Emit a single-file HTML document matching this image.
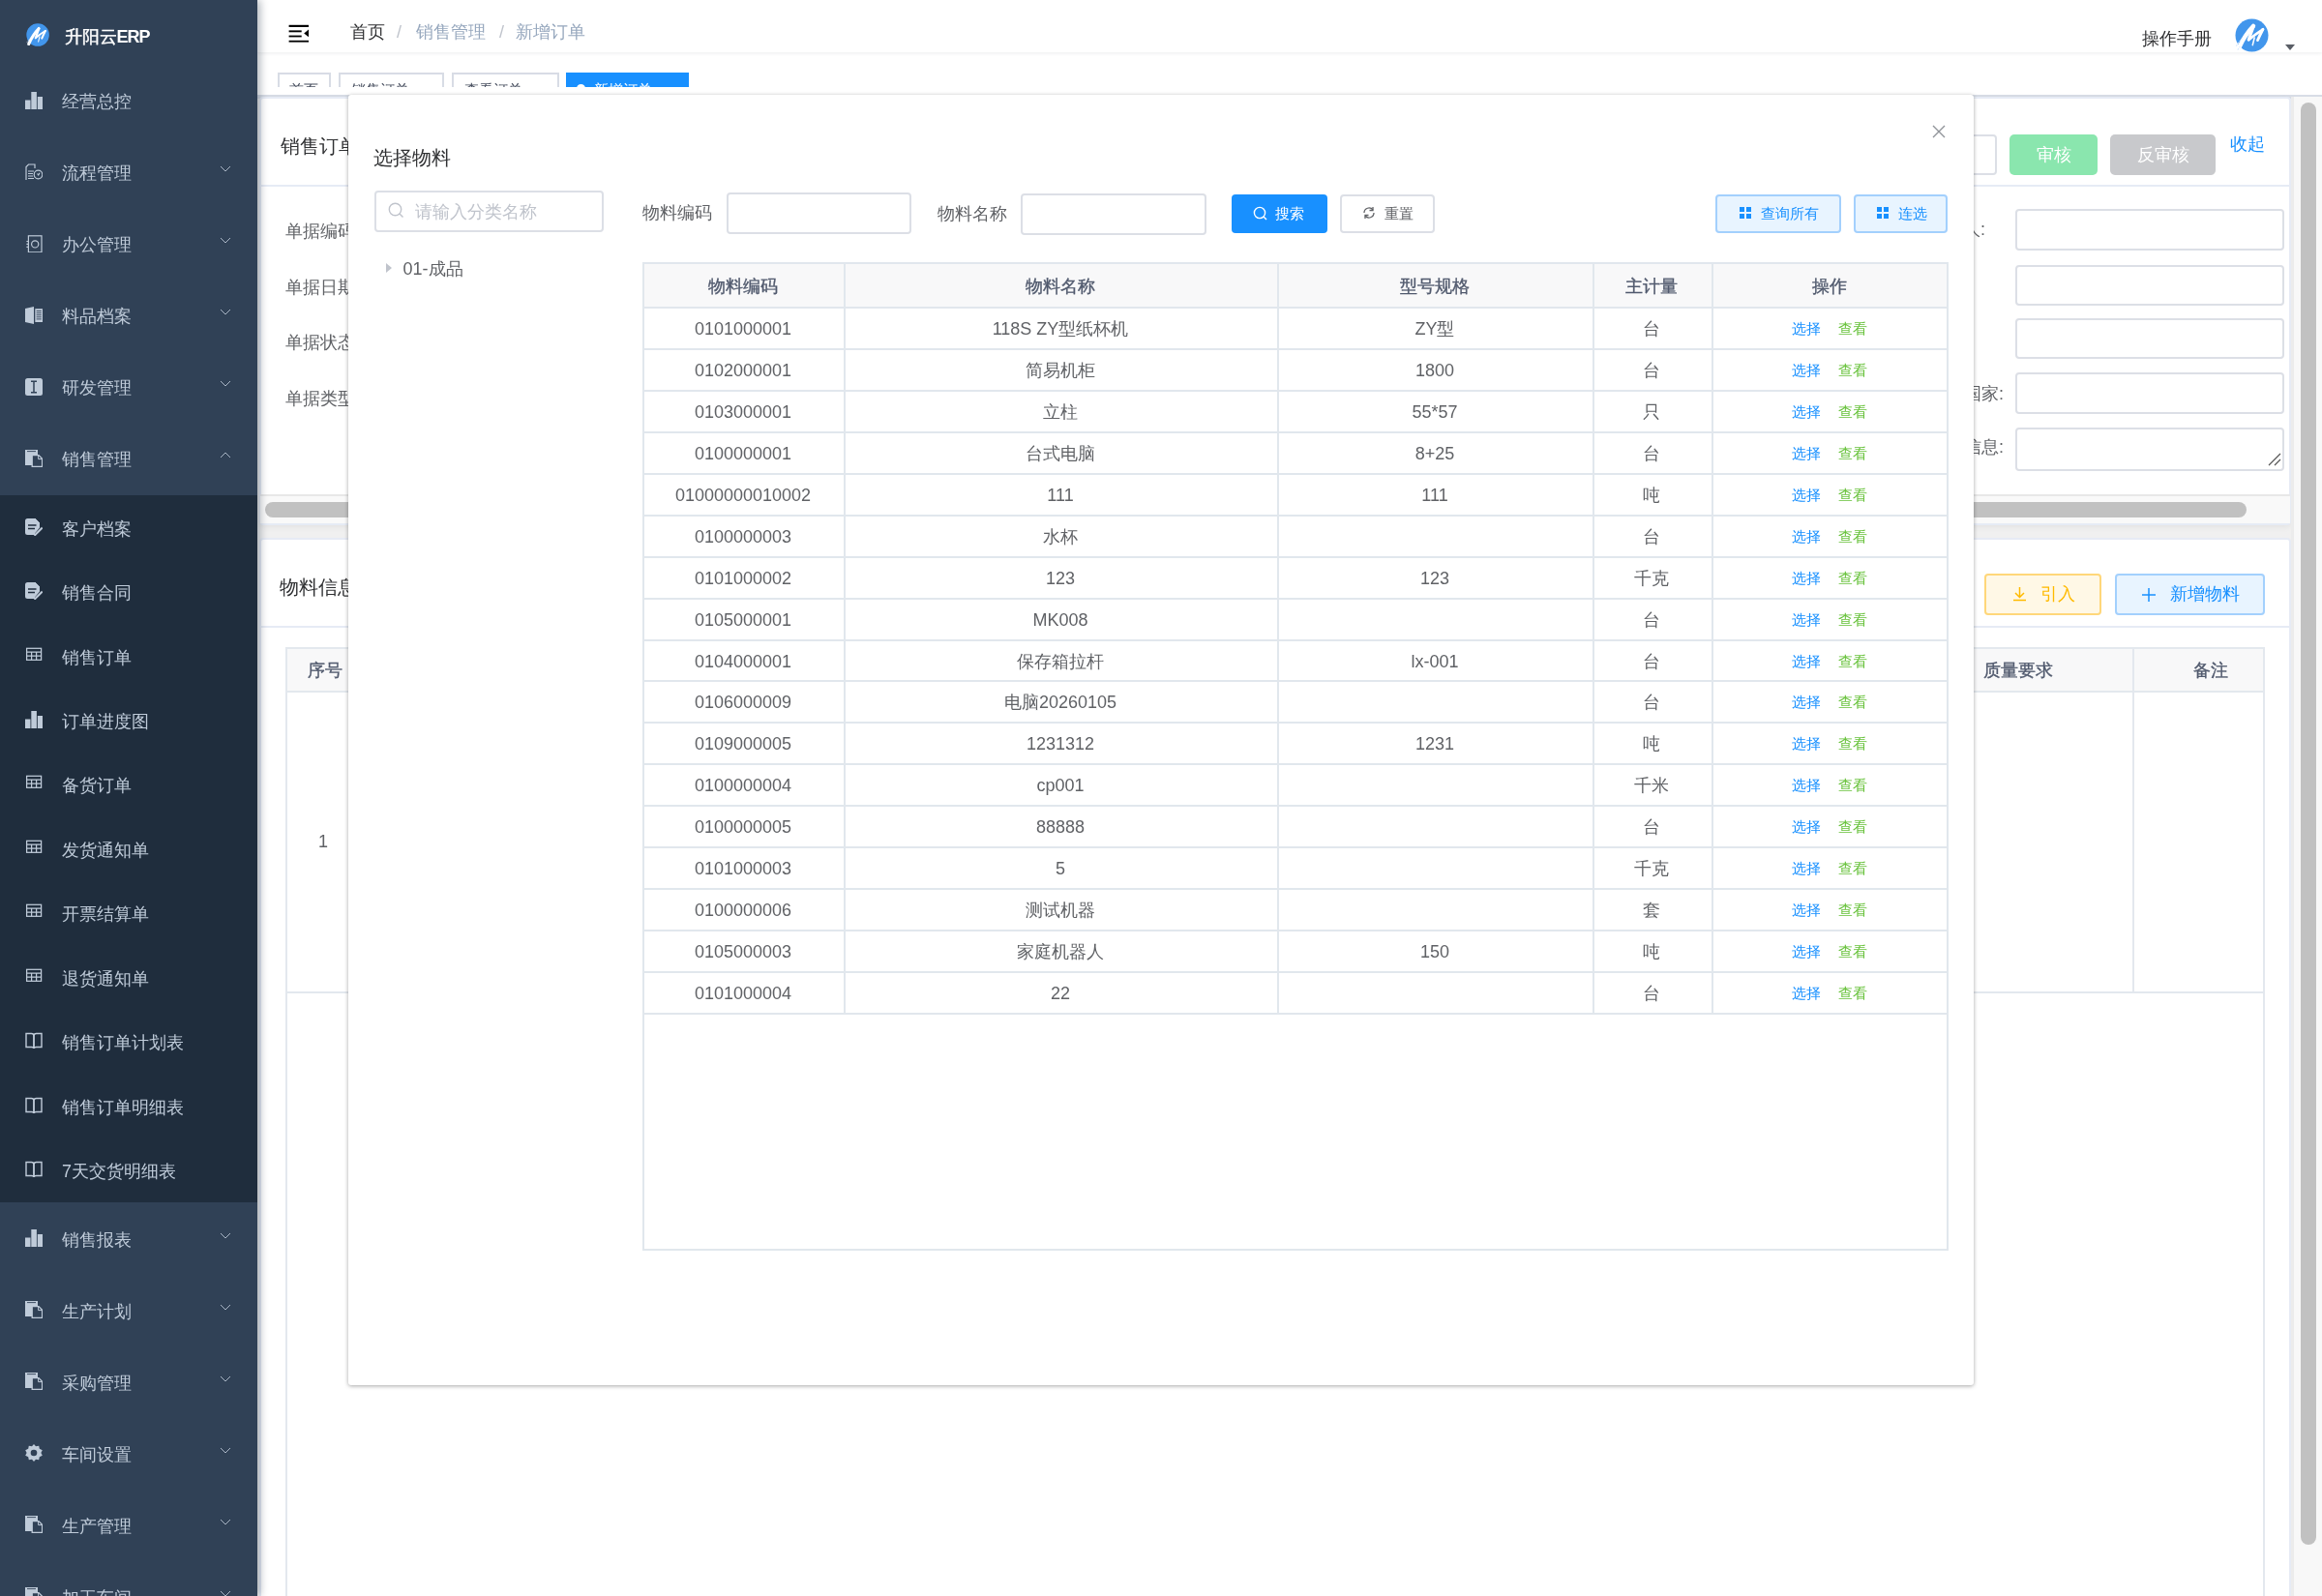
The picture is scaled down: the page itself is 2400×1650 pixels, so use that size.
<!DOCTYPE html>
<html><head><meta charset="utf-8">
<style>
*{box-sizing:border-box;margin:0;padding:0}
html,body{width:2400px;height:1650px;overflow:hidden;background:#fff;font-family:"Liberation Sans",sans-serif;}
.abs{position:absolute;display:block}
.txt{position:absolute;white-space:nowrap;line-height:20px}
.box{position:absolute}
.inp{position:absolute;border:2px solid #DCDFE6;border-radius:4px;background:#fff}
</style></head>
<body><div style="position:absolute;left:0;top:0;width:2400px;height:1650px;overflow:hidden;will-change:transform">

<div class="box" style="left:266px;top:0;width:2134px;height:1650px;background:#fff"></div>
<div class="box" style="left:266px;top:98px;width:2134px;height:1552px;background:#f0f0f0"></div>
<div class="box" style="left:266px;top:98px;width:2134px;height:3.5px;background:#d8dde6"></div>
<div class="box" style="left:266px;top:0;width:2134px;height:54px;background:#fff;box-shadow:0 1px 4px rgba(0,21,41,.08);z-index:2"></div>
<div class="box" style="left:266px;top:54px;width:2134px;height:43px;background:#fff;z-index:1"></div>
<svg class="abs" style="left:298px;top:25px;z-index:3" width="22" height="20" viewBox="0 0 22 20"><g fill="#000"><rect x="0.6" y="0.8" width="20.4" height="2.2"/><rect x="0.6" y="6.4" width="13.1" height="1.9"/><rect x="0.6" y="11.6" width="13.1" height="1.8"/><rect x="0.6" y="16.8" width="20.4" height="1.8"/><path d="M21 5.6V13.3L16.2 9.45Z"/></g></svg>
<div style="position:absolute;left:0;top:0;z-index:3">
<div class="txt" style="left:362px;top:23px;font-size:18px;color:#303133;font-weight:normal;">首页</div>
<div class="txt" style="left:410px;top:23px;font-size:18px;color:#c0c4cc;font-weight:normal;">/</div>
<div class="txt" style="left:430px;top:23px;font-size:18px;color:#97a8be;font-weight:normal;">销售管理</div>
<div class="txt" style="left:516px;top:23px;font-size:18px;color:#c0c4cc;font-weight:normal;">/</div>
<div class="txt" style="left:533px;top:23px;font-size:18px;color:#97a8be;font-weight:normal;">新增订单</div>
<div class="txt" style="left:2214px;top:30px;font-size:18px;color:#303133;font-weight:normal;">操作手册</div>
</div>
<svg class="abs" style="left:2310.2px;top:18.9px;z-index:3;overflow:visible" width="35" height="35" viewBox="0 0 36 36"><circle cx="18" cy="18" r="17.5" fill="#4296ec"/><g fill="none" stroke="#fff" stroke-linecap="round" stroke-linejoin="round"><path d="M4 32 Q10.5 17.5 19.5 8.2" stroke-width="4.6"/><path d="M19.8 8.5 Q17.6 14.5 14.6 22.6" stroke-width="3.2"/><path d="M14.6 22.8 Q22 16.5 29.8 11.6" stroke-width="2.8"/><path d="M29.6 11.8 Q26.4 18 24.2 23.2" stroke-width="3"/><path d="M20.8 20.5 L18.8 28.4" stroke-width="1.6"/></g><path d="M1.2 29.5 L7.5 21.5 M2.8 33.5 L5.5 30" stroke="#d6e8fd" stroke-width="1.1" stroke-dasharray="2 1"/></svg>
<svg class="abs" style="left:2362px;top:46px;z-index:3" width="10" height="6" viewBox="0 0 10 6"><path d="M0 0H10L5 6Z" fill="#5a5e66"/></svg>
<div class="box" style="left:266px;top:54px;width:2134px;height:36px;overflow:hidden;z-index:2">
<div class="box" style="left:21px;top:21px;width:54.69999999999999px;height:40px;border:2px solid #d8dce5;background:#fff"></div>
<div class="txt" style="left:33px;top:28.5px;font-size:15px;color:#495060;font-weight:normal;">首页</div>
<div class="box" style="left:84.39999999999998px;top:21px;width:109.10000000000002px;height:40px;border:2px solid #d8dce5;background:#fff"></div>
<div class="txt" style="left:96.6px;top:28.5px;font-size:15px;color:#495060;font-weight:normal;">销售订单</div>
<div class="box" style="left:201.3px;top:21px;width:110.49999999999994px;height:40px;border:2px solid #d8dce5;background:#fff"></div>
<div class="txt" style="left:214px;top:28.5px;font-size:15px;color:#495060;font-weight:normal;">查看订单</div>
<div class="box" style="left:319px;top:21px;width:127px;height:40px;background:#1890ff"></div>
<div class="box" style="left:329.6px;top:33px;width:9px;height:9px;border-radius:50%;background:#fff"></div>
<div class="txt" style="left:348px;top:28.5px;font-size:15px;color:#fff;font-weight:normal;">新增订单</div>
</div>
<div class="box" style="left:268px;top:100px;width:2100px;height:443px;background:#fff;border:2px solid #e6ebf5;border-radius:4px;box-shadow:0 2px 6px rgba(0,0,0,.06)"></div>
<div class="box" style="left:269px;top:191px;width:2098px;height:2px;background:#e6ebf5"></div>
<div class="txt" style="left:290px;top:141px;font-size:20px;color:#303133;font-weight:normal;">销售订单</div>
<div class="txt" style="left:295px;top:229.0px;font-size:18px;color:#606266;font-weight:normal;">单据编码</div>
<div class="txt" style="left:295px;top:286.5px;font-size:18px;color:#606266;font-weight:normal;">单据日期</div>
<div class="txt" style="left:295px;top:344.0px;font-size:18px;color:#606266;font-weight:normal;">单据状态</div>
<div class="txt" style="left:295px;top:401.5px;font-size:18px;color:#606266;font-weight:normal;">单据类型</div>
<div class="inp" style="left:1990px;top:139px;width:74px;height:42px"></div>
<div class="box" style="left:2077px;top:139px;width:91px;height:42px;border-radius:5px;background:#8ae6ae;color:#fff;font-size:18px;line-height:42px;text-align:center">审核</div>
<div class="box" style="left:2181px;top:139px;width:109px;height:42px;border-radius:5px;background:#c8c9cc;color:#fff;font-size:18px;line-height:42px;text-align:center">反审核</div>
<div class="txt" style="left:2305px;top:139px;font-size:18px;color:#1890ff;font-weight:normal;">收起</div>
<div class="inp" style="left:2083px;top:216px;width:278px;height:43px"></div>
<div class="inp" style="left:2083px;top:273.6px;width:278px;height:42px"></div>
<div class="inp" style="left:2083px;top:329.4px;width:278px;height:42px"></div>
<div class="inp" style="left:2083px;top:385.2px;width:278px;height:43px"></div>
<div class="inp" style="left:2083px;top:441.6px;width:278px;height:45px"></div>
<div class="txt" style="left:1900px;top:227px;width:152px;text-align:right;font-size:18px;color:#606266">负责人:</div>
<div class="txt" style="left:1900px;top:397px;width:171px;text-align:right;font-size:18px;color:#606266">国家:</div>
<div class="txt" style="left:1900px;top:452px;width:171px;text-align:right;font-size:18px;color:#606266">信息:</div>
<svg class="abs" style="left:2344px;top:468px" width="14" height="14" viewBox="0 0 14 14"><path d="M1 13L13 1M7 13L13 7" stroke="#555" stroke-width="1.2"/></svg>
<div class="box" style="left:269px;top:511px;width:2098px;height:30px;background:#f9f9f9;border-top:2px solid #e8e8e8"></div>
<div class="box" style="left:274px;top:519px;width:2048px;height:16px;border-radius:8px;background:#c1c1c1"></div>
<div class="box" style="left:268px;top:556px;width:2100px;height:1200px;background:#fff;border:2px solid #e6ebf5;border-radius:4px"></div>
<div class="box" style="left:269px;top:647px;width:2098px;height:2px;background:#e6ebf5"></div>
<div class="txt" style="left:289px;top:597px;font-size:20px;color:#303133;font-weight:normal;">物料信息</div>
<div class="box" style="left:2051px;top:593px;width:121px;height:43px;border-radius:4px;background:#fff8e6;border:2px solid #ffd77a"></div>
<svg class="abs" style="left:2080px;top:606px" width="15" height="16" viewBox="0 0 15 16"><path d="M7.5 1V11M3 7L7.5 11.5L12 7M1 14.5H14" fill="none" stroke="#ffba00" stroke-width="1.5"/></svg>
<div class="txt" style="left:2109px;top:604px;font-size:18px;color:#ffba00;font-weight:normal;">引入</div>
<div class="box" style="left:2186px;top:593px;width:155px;height:43px;border-radius:4px;background:#e8f4ff;border:2px solid #a3d0fd"></div>
<svg class="abs" style="left:2213px;top:607px" width="16" height="16" viewBox="0 0 16 16"><path d="M8 1V15M1 8H15" fill="none" stroke="#1890ff" stroke-width="1.5"/></svg>
<div class="txt" style="left:2243px;top:604px;font-size:18px;color:#1890ff;font-weight:normal;">新增物料</div>
<div class="box" style="left:295px;top:669px;width:2046px;height:1000px;border:2px solid #e3e8ee;border-bottom:none"></div>
<div class="box" style="left:297px;top:671px;width:2042px;height:45px;background:#f8f8f9;border-bottom:2px solid #e3e8ee"></div>
<div class="box" style="left:2204px;top:671px;width:2px;height:356px;background:#e3e8ee"></div>
<div class="box" style="left:297px;top:1025px;width:2042px;height:2px;background:#e3e8ee"></div>
<div class="txt" style="left:318px;top:682.5px;font-size:18px;color:#515a6e;font-weight:normal;-webkit-text-stroke:0.35px #515a6e">序号</div>
<div class="txt" style="left:2050px;top:682.5px;font-size:18px;color:#515a6e;font-weight:normal;-webkit-text-stroke:0.35px #515a6e">质量要求</div>
<div class="txt" style="left:2267px;top:682.5px;font-size:18px;color:#515a6e;font-weight:normal;-webkit-text-stroke:0.35px #515a6e">备注</div>
<div class="txt" style="left:329px;top:860px;font-size:18px;color:#606266;font-weight:normal;">1</div>
<div class="box" style="left:2368px;top:100px;width:32px;height:1550px;background:#f8f8f8;border-left:3px solid #ececec"></div>
<div class="box" style="left:2378px;top:106px;width:16px;height:1491px;border-radius:8px;background:#c1c1c1"></div>
<div class="box" style="left:0;top:0;width:266px;height:1650px;background:#304156;box-shadow:3px 0 8px rgba(0,21,41,.3);z-index:4">
<svg class="abs" style="left:26.9px;top:23.6px;overflow:visible" width="24.2" height="24.2" viewBox="0 0 36 36"><circle cx="18" cy="18" r="17.5" fill="#4296ec"/><g fill="none" stroke="#fff" stroke-linecap="round" stroke-linejoin="round"><path d="M4 32 Q10.5 17.5 19.5 8.2" stroke-width="4.6"/><path d="M19.8 8.5 Q17.6 14.5 14.6 22.6" stroke-width="3.2"/><path d="M14.6 22.8 Q22 16.5 29.8 11.6" stroke-width="2.8"/><path d="M29.6 11.8 Q26.4 18 24.2 23.2" stroke-width="3"/><path d="M20.8 20.5 L18.8 28.4" stroke-width="1.6"/></g><path d="M1.2 29.5 L7.5 21.5 M2.8 33.5 L5.5 30" stroke="#d6e8fd" stroke-width="1.1" stroke-dasharray="2 1"/></svg>
<div class="txt" style="left:66.5px;top:28px;font-size:18px;color:#fff;font-weight:normal;"><span style="-webkit-text-stroke:0.4px #fff">升阳云</span><span style="font-weight:bold;letter-spacing:-1px">ERP</span></div>
<svg class="abs" style="left:26px;top:95px" width="18" height="18" viewBox="0 0 18 18" fill="#bfcbd9"><rect x="0" y="8.5" width="5.5" height="9.5"/><rect x="6.3" y="0" width="5.6" height="18"/><rect x="12.8" y="5" width="5.4" height="13"/></svg>
<div class="txt" style="left:64px;top:95px;font-size:18px;color:#bfcbd9;font-weight:normal;">经营总控</div>
<svg class="abs" style="left:26px;top:169px" width="18" height="18" viewBox="0 0 18 18" fill="#bfcbd9"><g fill="none" stroke="#bfcbd9" stroke-width="1.2"><path d="M1 17V3.5L3.5 1H10V5"/><path d="M3 8h6M3 10.5h5M3 13h5M3 15.5h6"/><circle cx="13.5" cy="11.5" r="4.3"/><path d="M12.5 10.5l1.2 1.5 1.3-2.2"/></g></svg>
<div class="txt" style="left:64px;top:169px;font-size:18px;color:#bfcbd9;font-weight:normal;">流程管理</div>
<svg class="abs" style="left:227px;top:171px" width="12" height="7" viewBox="0 0 12 7"><path d="M1 1L6 6L11 1" fill="none" stroke="#bfcbd9" stroke-width="1" opacity="0.85"/></svg>
<svg class="abs" style="left:26px;top:243px" width="18" height="18" viewBox="0 0 18 18" fill="#bfcbd9"><g fill="none" stroke="#bfcbd9" stroke-width="1.2"><rect x="3.4" y="0.8" width="13.6" height="17"/><circle cx="10.2" cy="9.4" r="3.6"/><path d="M1.4 6.5h2.6M1.4 9.4h2.6M1.4 12.3h2.6"/></g></svg>
<div class="txt" style="left:64px;top:243px;font-size:18px;color:#bfcbd9;font-weight:normal;">办公管理</div>
<svg class="abs" style="left:227px;top:245px" width="12" height="7" viewBox="0 0 12 7"><path d="M1 1L6 6L11 1" fill="none" stroke="#bfcbd9" stroke-width="1" opacity="0.85"/></svg>
<svg class="abs" style="left:26px;top:317px" width="18" height="18" viewBox="0 0 18 18" fill="#bfcbd9"><path d="M0 2L9 0V18L0 16Z"/><rect x="10.3" y="2.2" width="7.7" height="13.8"/><g stroke="#304156" stroke-width="0.9"><path d="M11.6 4.5h5.2M11.6 6.6h5.2M11.6 8.7h5.2M11.6 10.8h5.2M11.6 12.9h5.2"/></g></svg>
<div class="txt" style="left:64px;top:317px;font-size:18px;color:#bfcbd9;font-weight:normal;">料品档案</div>
<svg class="abs" style="left:227px;top:319px" width="12" height="7" viewBox="0 0 12 7"><path d="M1 1L6 6L11 1" fill="none" stroke="#bfcbd9" stroke-width="1" opacity="0.85"/></svg>
<svg class="abs" style="left:26px;top:391px" width="18" height="18" viewBox="0 0 18 18" fill="#bfcbd9"><rect x="0" y="0" width="18" height="18" rx="2.5"/><path d="M6 3.2h6M9 3.2v11.6M6 14.8h6" stroke="#304156" stroke-width="1.5"/></svg>
<div class="txt" style="left:64px;top:391px;font-size:18px;color:#bfcbd9;font-weight:normal;">研发管理</div>
<svg class="abs" style="left:227px;top:393px" width="12" height="7" viewBox="0 0 12 7"><path d="M1 1L6 6L11 1" fill="none" stroke="#bfcbd9" stroke-width="1" opacity="0.85"/></svg>
<svg class="abs" style="left:26px;top:465px" width="18" height="18" viewBox="0 0 18 18" fill="#bfcbd9"><path d="M0 0H13V16H0Z"/><path d="M2 1.6h9" stroke="#304156" stroke-width="0.9"/><path d="M7.2 5.6H14L17.6 9.2V17.4H7.2Z" fill="#304156" stroke="#bfcbd9" stroke-width="1.3"/><path d="M13.6 5.6V9.6H17.6" fill="none" stroke="#bfcbd9" stroke-width="1"/></svg>
<div class="txt" style="left:64px;top:465px;font-size:18px;color:#bfcbd9;font-weight:normal;">销售管理</div>
<svg class="abs" style="left:227px;top:467px" width="12" height="7" viewBox="0 0 12 7"><path d="M1 6L6 1L11 6" fill="none" stroke="#bfcbd9" stroke-width="1" opacity="0.85"/></svg>
<div class="box" style="left:0;top:512px;width:266px;height:731px;background:#1f2d3d"></div>
<svg class="abs" style="left:26px;top:535.6px" width="18" height="18" viewBox="0 0 18 18" fill="#bfcbd9"><path d="M0 2.5Q0 0 2.5 0H11L15 4V9.5L10 15.5V17H2.5Q0 17 0 14.5Z"/><path d="M3 7h8.5M3 10.5h7" stroke="#1f2d3d" stroke-width="1.6"/><path d="M9.5 17.8l8.3-8.3" stroke="#bfcbd9" stroke-width="2"/><path d="M11 0l4 4" stroke="#1f2d3d" stroke-width="0.8"/></svg>
<div class="txt" style="left:64px;top:536.6px;font-size:18px;color:#bfcbd9;font-weight:normal;">客户档案</div>
<svg class="abs" style="left:26px;top:602.1px" width="18" height="18" viewBox="0 0 18 18" fill="#bfcbd9"><path d="M0 2.5Q0 0 2.5 0H11L15 4V9.5L10 15.5V17H2.5Q0 17 0 14.5Z"/><path d="M3 7h8.5M3 10.5h7" stroke="#1f2d3d" stroke-width="1.6"/><path d="M9.5 17.8l8.3-8.3" stroke="#bfcbd9" stroke-width="2"/><path d="M11 0l4 4" stroke="#1f2d3d" stroke-width="0.8"/></svg>
<div class="txt" style="left:64px;top:603.1px;font-size:18px;color:#bfcbd9;font-weight:normal;">销售合同</div>
<svg class="abs" style="left:26px;top:668.5px" width="18" height="18" viewBox="0 0 18 18" fill="#bfcbd9"><g fill="none" stroke="#bfcbd9" stroke-width="1.25"><rect x="1.6" y="1.3" width="15" height="12"/><path d="M1.6 5.2h15M1.6 9.2h15M6.6 5.2v8M11.6 5.2v8"/></g></svg>
<div class="txt" style="left:64px;top:669.5px;font-size:18px;color:#bfcbd9;font-weight:normal;">销售订单</div>
<svg class="abs" style="left:26px;top:735.0px" width="18" height="18" viewBox="0 0 18 18" fill="#bfcbd9"><rect x="0" y="8.5" width="5.5" height="9.5"/><rect x="6.3" y="0" width="5.6" height="18"/><rect x="12.8" y="5" width="5.4" height="13"/></svg>
<div class="txt" style="left:64px;top:736.0px;font-size:18px;color:#bfcbd9;font-weight:normal;">订单进度图</div>
<svg class="abs" style="left:26px;top:801.4px" width="18" height="18" viewBox="0 0 18 18" fill="#bfcbd9"><g fill="none" stroke="#bfcbd9" stroke-width="1.25"><rect x="1.6" y="1.3" width="15" height="12"/><path d="M1.6 5.2h15M1.6 9.2h15M6.6 5.2v8M11.6 5.2v8"/></g></svg>
<div class="txt" style="left:64px;top:802.4px;font-size:18px;color:#bfcbd9;font-weight:normal;">备货订单</div>
<svg class="abs" style="left:26px;top:867.9px" width="18" height="18" viewBox="0 0 18 18" fill="#bfcbd9"><g fill="none" stroke="#bfcbd9" stroke-width="1.25"><rect x="1.6" y="1.3" width="15" height="12"/><path d="M1.6 5.2h15M1.6 9.2h15M6.6 5.2v8M11.6 5.2v8"/></g></svg>
<div class="txt" style="left:64px;top:868.9px;font-size:18px;color:#bfcbd9;font-weight:normal;">发货通知单</div>
<svg class="abs" style="left:26px;top:934.3px" width="18" height="18" viewBox="0 0 18 18" fill="#bfcbd9"><g fill="none" stroke="#bfcbd9" stroke-width="1.25"><rect x="1.6" y="1.3" width="15" height="12"/><path d="M1.6 5.2h15M1.6 9.2h15M6.6 5.2v8M11.6 5.2v8"/></g></svg>
<div class="txt" style="left:64px;top:935.3px;font-size:18px;color:#bfcbd9;font-weight:normal;">开票结算单</div>
<svg class="abs" style="left:26px;top:1000.8px" width="18" height="18" viewBox="0 0 18 18" fill="#bfcbd9"><g fill="none" stroke="#bfcbd9" stroke-width="1.25"><rect x="1.6" y="1.3" width="15" height="12"/><path d="M1.6 5.2h15M1.6 9.2h15M6.6 5.2v8M11.6 5.2v8"/></g></svg>
<div class="txt" style="left:64px;top:1001.8px;font-size:18px;color:#bfcbd9;font-weight:normal;">退货通知单</div>
<svg class="abs" style="left:26px;top:1067.2px" width="18" height="18" viewBox="0 0 18 18" fill="#bfcbd9"><g fill="none" stroke="#bfcbd9" stroke-width="1.4"><path d="M1 1.5h5.5Q9 1.5 9 4V17Q9 15.5 6.5 15.5H1Z"/><path d="M17 1.5h-5.5Q9 1.5 9 4V17Q9 15.5 11.5 15.5H17Z"/></g></svg>
<div class="txt" style="left:64px;top:1068.2px;font-size:18px;color:#bfcbd9;font-weight:normal;">销售订单计划表</div>
<svg class="abs" style="left:26px;top:1133.7px" width="18" height="18" viewBox="0 0 18 18" fill="#bfcbd9"><g fill="none" stroke="#bfcbd9" stroke-width="1.4"><path d="M1 1.5h5.5Q9 1.5 9 4V17Q9 15.5 6.5 15.5H1Z"/><path d="M17 1.5h-5.5Q9 1.5 9 4V17Q9 15.5 11.5 15.5H17Z"/></g></svg>
<div class="txt" style="left:64px;top:1134.7px;font-size:18px;color:#bfcbd9;font-weight:normal;">销售订单明细表</div>
<svg class="abs" style="left:26px;top:1200.1px" width="18" height="18" viewBox="0 0 18 18" fill="#bfcbd9"><g fill="none" stroke="#bfcbd9" stroke-width="1.4"><path d="M1 1.5h5.5Q9 1.5 9 4V17Q9 15.5 6.5 15.5H1Z"/><path d="M17 1.5h-5.5Q9 1.5 9 4V17Q9 15.5 11.5 15.5H17Z"/></g></svg>
<div class="txt" style="left:64px;top:1201.1px;font-size:18px;color:#bfcbd9;font-weight:normal;">7天交货明细表</div>
<svg class="abs" style="left:26px;top:1271.4px" width="18" height="18" viewBox="0 0 18 18" fill="#bfcbd9"><rect x="0" y="8.5" width="5.5" height="9.5"/><rect x="6.3" y="0" width="5.6" height="18"/><rect x="12.8" y="5" width="5.4" height="13"/></svg>
<div class="txt" style="left:64px;top:1272.4px;font-size:18px;color:#bfcbd9;font-weight:normal;">销售报表</div>
<svg class="abs" style="left:227px;top:1274.4px" width="12" height="7" viewBox="0 0 12 7"><path d="M1 1L6 6L11 1" fill="none" stroke="#bfcbd9" stroke-width="1" opacity="0.85"/></svg>
<svg class="abs" style="left:26px;top:1345.4px" width="18" height="18" viewBox="0 0 18 18" fill="#bfcbd9"><path d="M0 0H13V16H0Z"/><path d="M2 1.6h9" stroke="#304156" stroke-width="0.9"/><path d="M7.2 5.6H14L17.6 9.2V17.4H7.2Z" fill="#304156" stroke="#bfcbd9" stroke-width="1.3"/><path d="M13.6 5.6V9.6H17.6" fill="none" stroke="#bfcbd9" stroke-width="1"/></svg>
<div class="txt" style="left:64px;top:1346.4px;font-size:18px;color:#bfcbd9;font-weight:normal;">生产计划</div>
<svg class="abs" style="left:227px;top:1348.4px" width="12" height="7" viewBox="0 0 12 7"><path d="M1 1L6 6L11 1" fill="none" stroke="#bfcbd9" stroke-width="1" opacity="0.85"/></svg>
<svg class="abs" style="left:26px;top:1419.4px" width="18" height="18" viewBox="0 0 18 18" fill="#bfcbd9"><path d="M0 0H13V16H0Z"/><path d="M2 1.6h9" stroke="#304156" stroke-width="0.9"/><path d="M7.2 5.6H14L17.6 9.2V17.4H7.2Z" fill="#304156" stroke="#bfcbd9" stroke-width="1.3"/><path d="M13.6 5.6V9.6H17.6" fill="none" stroke="#bfcbd9" stroke-width="1"/></svg>
<div class="txt" style="left:64px;top:1420.4px;font-size:18px;color:#bfcbd9;font-weight:normal;">采购管理</div>
<svg class="abs" style="left:227px;top:1422.4px" width="12" height="7" viewBox="0 0 12 7"><path d="M1 1L6 6L11 1" fill="none" stroke="#bfcbd9" stroke-width="1" opacity="0.85"/></svg>
<svg class="abs" style="left:26px;top:1493.4px" width="18" height="18" viewBox="0 0 18 18" fill="#bfcbd9"><path d="M9 0l2 2.6 3.2-.6.6 3.2L17.8 7 16.4 10l1.4 3-3 1.8-.6 3.2-3.2-.6L9 20 7 17.4l-3.2.6-.6-3.2L.2 13 1.6 10 .2 7l3-1.8.6-3.2 3.2.6Z" transform="scale(1,0.9)"/><circle cx="9" cy="9" r="3.3" fill="#304156"/></svg>
<div class="txt" style="left:64px;top:1494.4px;font-size:18px;color:#bfcbd9;font-weight:normal;">车间设置</div>
<svg class="abs" style="left:227px;top:1496.4px" width="12" height="7" viewBox="0 0 12 7"><path d="M1 1L6 6L11 1" fill="none" stroke="#bfcbd9" stroke-width="1" opacity="0.85"/></svg>
<svg class="abs" style="left:26px;top:1567.4px" width="18" height="18" viewBox="0 0 18 18" fill="#bfcbd9"><path d="M0 0H13V16H0Z"/><path d="M2 1.6h9" stroke="#304156" stroke-width="0.9"/><path d="M7.2 5.6H14L17.6 9.2V17.4H7.2Z" fill="#304156" stroke="#bfcbd9" stroke-width="1.3"/><path d="M13.6 5.6V9.6H17.6" fill="none" stroke="#bfcbd9" stroke-width="1"/></svg>
<div class="txt" style="left:64px;top:1568.4px;font-size:18px;color:#bfcbd9;font-weight:normal;">生产管理</div>
<svg class="abs" style="left:227px;top:1570.4px" width="12" height="7" viewBox="0 0 12 7"><path d="M1 1L6 6L11 1" fill="none" stroke="#bfcbd9" stroke-width="1" opacity="0.85"/></svg>
<svg class="abs" style="left:26px;top:1641.4px" width="18" height="18" viewBox="0 0 18 18" fill="#bfcbd9"><path d="M0 0H13V16H0Z"/><path d="M2 1.6h9" stroke="#304156" stroke-width="0.9"/><path d="M7.2 5.6H14L17.6 9.2V17.4H7.2Z" fill="#304156" stroke="#bfcbd9" stroke-width="1.3"/><path d="M13.6 5.6V9.6H17.6" fill="none" stroke="#bfcbd9" stroke-width="1"/></svg>
<div class="txt" style="left:64px;top:1642.4px;font-size:18px;color:#bfcbd9;font-weight:normal;">加工车间</div>
<svg class="abs" style="left:227px;top:1644.4px" width="12" height="7" viewBox="0 0 12 7"><path d="M1 1L6 6L11 1" fill="none" stroke="#bfcbd9" stroke-width="1" opacity="0.85"/></svg>
</div>
<div class="box" style="left:360px;top:98px;width:1680px;height:1334px;background:#fff;border-radius:3px;box-shadow:0 1px 4px rgba(0,0,0,.35);z-index:10">
<div class="txt" style="left:26px;top:55px;font-size:20px;color:#303133;font-weight:normal;">选择物料</div>
<svg class="abs" style="left:1637px;top:31px" width="14" height="14" viewBox="0 0 14 14"><path d="M1 1L13 13M13 1L1 13" stroke="#909399" stroke-width="1.4"/></svg>
<div class="box" style="left:26.5px;top:98.5px;width:237px;height:43px;border:2px solid #dcdfe6;border-radius:4px;background:#fff"></div>
<svg class="abs" style="left:41px;top:111px" width="17" height="17" viewBox="0 0 17 17"><circle cx="7.5" cy="7.5" r="6.2" fill="none" stroke="#c0c4cc" stroke-width="1.4"/><path d="M12 12L15.5 15.5" stroke="#c0c4cc" stroke-width="1.4"/></svg>
<div class="txt" style="left:69px;top:110.5px;font-size:18px;color:#c0c4cc;font-weight:normal;">请输入分类名称</div>
<svg class="abs" style="left:38px;top:174px" width="8" height="10" viewBox="0 0 8 10"><path d="M1 0L7 5L1 10Z" fill="#c0c4cc"/></svg>
<div class="txt" style="left:56.5px;top:170px;font-size:18px;color:#606266;font-weight:normal;">01-成品</div>
<div class="txt" style="left:304px;top:112px;font-size:18px;color:#606266;font-weight:normal;">物料编码</div>
<div class="box" style="left:391px;top:101px;width:191px;height:43px;border:2px solid #dcdfe6;border-radius:4px"></div>
<div class="txt" style="left:609px;top:112.5px;font-size:18px;color:#606266;font-weight:normal;">物料名称</div>
<div class="box" style="left:695px;top:101.5px;width:191.5px;height:43px;border:2px solid #dcdfe6;border-radius:4px"></div>
<div class="box" style="left:912.6px;top:102.7px;width:99.4px;height:40.3px;background:#1890ff;border-radius:4px"></div>
<svg class="abs" style="left:935px;top:115px" width="16" height="15" viewBox="0 0 16 15"><circle cx="7" cy="7" r="5.6" fill="none" stroke="#fff" stroke-width="1.4"/><path d="M11 11L14 14" stroke="#fff" stroke-width="1.4"/></svg>
<div class="txt" style="left:958px;top:113px;font-size:15px;color:#fff;font-weight:normal;">搜索</div>
<div class="box" style="left:1025.3px;top:102.7px;width:97.7px;height:40.3px;background:#fff;border:2px solid #dcdfe6;border-radius:4px"></div>
<svg class="abs" style="left:1048px;top:115px" width="14" height="14" viewBox="0 0 14 14"><path d="M2 7A5 5 0 0 1 11 4M12 7A5 5 0 0 1 3 10" fill="none" stroke="#606266" stroke-width="1.3"/><path d="M11 1V4.5H7.5M3 13V9.5H6.5" fill="none" stroke="#606266" stroke-width="1.3"/></svg>
<div class="txt" style="left:1070.5px;top:113px;font-size:15px;color:#606266;font-weight:normal;">重置</div>
<div class="box" style="left:1413.2px;top:103px;width:129.4px;height:40px;background:#e8f4ff;border:2px solid #a3d0fd;border-radius:4px"></div>
<svg class="abs" style="left:1437.6px;top:116.4px" width="12" height="12" viewBox="0 0 12 12" fill="#1890ff"><rect x="0" y="0" width="5" height="5"/><rect x="7" y="0" width="5" height="5"/><rect x="0" y="7" width="5" height="5"/><rect x="7" y="7" width="5" height="5"/></svg>
<div class="txt" style="left:1460px;top:113px;font-size:15px;color:#1890ff;font-weight:normal;">查询所有</div>
<div class="box" style="left:1556.4px;top:103px;width:97px;height:40px;background:#e8f4ff;border:2px solid #a3d0fd;border-radius:4px"></div>
<svg class="abs" style="left:1580px;top:116.4px" width="12" height="12" viewBox="0 0 12 12" fill="#1890ff"><rect x="0" y="0" width="5" height="5"/><rect x="7" y="0" width="5" height="5"/><rect x="0" y="7" width="5" height="5"/><rect x="7" y="7" width="5" height="5"/></svg>
<div class="txt" style="left:1602px;top:113px;font-size:15px;color:#1890ff;font-weight:normal;">连选</div>
<div class="box" style="left:304px;top:173px;width:1350px;height:1022px;border:2px solid #e1e7ed"></div>
<div class="box" style="left:306px;top:175px;width:1346px;height:45px;background:#f8f8f9"></div>
<div class="box" style="left:304px;top:219px;width:1350px;height:2px;background:#e1e7ed"></div>
<div class="box" style="left:304px;top:261.94px;width:1350px;height:2px;background:#e1e7ed"></div>
<div class="box" style="left:304px;top:304.88px;width:1350px;height:2px;background:#e1e7ed"></div>
<div class="box" style="left:304px;top:347.82px;width:1350px;height:2px;background:#e1e7ed"></div>
<div class="box" style="left:304px;top:390.76px;width:1350px;height:2px;background:#e1e7ed"></div>
<div class="box" style="left:304px;top:433.7px;width:1350px;height:2px;background:#e1e7ed"></div>
<div class="box" style="left:304px;top:476.64px;width:1350px;height:2px;background:#e1e7ed"></div>
<div class="box" style="left:304px;top:519.58px;width:1350px;height:2px;background:#e1e7ed"></div>
<div class="box" style="left:304px;top:562.52px;width:1350px;height:2px;background:#e1e7ed"></div>
<div class="box" style="left:304px;top:605.46px;width:1350px;height:2px;background:#e1e7ed"></div>
<div class="box" style="left:304px;top:648.4px;width:1350px;height:2px;background:#e1e7ed"></div>
<div class="box" style="left:304px;top:691.34px;width:1350px;height:2px;background:#e1e7ed"></div>
<div class="box" style="left:304px;top:734.28px;width:1350px;height:2px;background:#e1e7ed"></div>
<div class="box" style="left:304px;top:777.22px;width:1350px;height:2px;background:#e1e7ed"></div>
<div class="box" style="left:304px;top:820.16px;width:1350px;height:2px;background:#e1e7ed"></div>
<div class="box" style="left:304px;top:863.1px;width:1350px;height:2px;background:#e1e7ed"></div>
<div class="box" style="left:304px;top:906.04px;width:1350px;height:2px;background:#e1e7ed"></div>
<div class="box" style="left:304px;top:948.98px;width:1350px;height:2px;background:#e1e7ed"></div>
<div class="box" style="left:512px;top:173px;width:2px;height:777.98px;background:#e1e7ed"></div>
<div class="box" style="left:960px;top:173px;width:2px;height:777.98px;background:#e1e7ed"></div>
<div class="box" style="left:1286px;top:173px;width:2px;height:777.98px;background:#e1e7ed"></div>
<div class="box" style="left:1408.5px;top:173px;width:2px;height:777.98px;background:#e1e7ed"></div>
<div class="txt" style="left:304px;top:187.5px;width:208px;text-align:center;font-size:18px;color:#515a6e;-webkit-text-stroke:0.35px #515a6e">物料编码</div>
<div class="txt" style="left:512px;top:187.5px;width:448px;text-align:center;font-size:18px;color:#515a6e;-webkit-text-stroke:0.35px #515a6e">物料名称</div>
<div class="txt" style="left:960px;top:187.5px;width:326px;text-align:center;font-size:18px;color:#515a6e;-webkit-text-stroke:0.35px #515a6e">型号规格</div>
<div class="txt" style="left:1286px;top:187.5px;width:122.5px;text-align:center;font-size:18px;color:#515a6e;-webkit-text-stroke:0.35px #515a6e">主计量</div>
<div class="txt" style="left:1408.5px;top:187.5px;width:245.5px;text-align:center;font-size:18px;color:#515a6e;-webkit-text-stroke:0.35px #515a6e">操作</div>
<div class="txt" style="left:304px;top:232.0px;width:208px;text-align:center;font-size:18px;color:#606266">0101000001</div>
<div class="txt" style="left:512px;top:232.0px;width:448px;text-align:center;font-size:18px;color:#606266">118S ZY型纸杯机</div>
<div class="txt" style="left:960px;top:232.0px;width:326px;text-align:center;font-size:18px;color:#606266">ZY型</div>
<div class="txt" style="left:1286px;top:232.0px;width:122.5px;text-align:center;font-size:18px;color:#606266">台</div>
<div class="txt" style="left:1492px;top:232.0px;font-size:14.5px;color:#1890ff;font-weight:normal;">选择</div>
<div class="txt" style="left:1539.5px;top:232.0px;font-size:14.5px;color:#67c23a;font-weight:normal;">查看</div>
<div class="txt" style="left:304px;top:274.94px;width:208px;text-align:center;font-size:18px;color:#606266">0102000001</div>
<div class="txt" style="left:512px;top:274.94px;width:448px;text-align:center;font-size:18px;color:#606266">简易机柜</div>
<div class="txt" style="left:960px;top:274.94px;width:326px;text-align:center;font-size:18px;color:#606266">1800</div>
<div class="txt" style="left:1286px;top:274.94px;width:122.5px;text-align:center;font-size:18px;color:#606266">台</div>
<div class="txt" style="left:1492px;top:274.94px;font-size:14.5px;color:#1890ff;font-weight:normal;">选择</div>
<div class="txt" style="left:1539.5px;top:274.94px;font-size:14.5px;color:#67c23a;font-weight:normal;">查看</div>
<div class="txt" style="left:304px;top:317.88px;width:208px;text-align:center;font-size:18px;color:#606266">0103000001</div>
<div class="txt" style="left:512px;top:317.88px;width:448px;text-align:center;font-size:18px;color:#606266">立柱</div>
<div class="txt" style="left:960px;top:317.88px;width:326px;text-align:center;font-size:18px;color:#606266">55*57</div>
<div class="txt" style="left:1286px;top:317.88px;width:122.5px;text-align:center;font-size:18px;color:#606266">只</div>
<div class="txt" style="left:1492px;top:317.88px;font-size:14.5px;color:#1890ff;font-weight:normal;">选择</div>
<div class="txt" style="left:1539.5px;top:317.88px;font-size:14.5px;color:#67c23a;font-weight:normal;">查看</div>
<div class="txt" style="left:304px;top:360.82px;width:208px;text-align:center;font-size:18px;color:#606266">0100000001</div>
<div class="txt" style="left:512px;top:360.82px;width:448px;text-align:center;font-size:18px;color:#606266">台式电脑</div>
<div class="txt" style="left:960px;top:360.82px;width:326px;text-align:center;font-size:18px;color:#606266">8+25</div>
<div class="txt" style="left:1286px;top:360.82px;width:122.5px;text-align:center;font-size:18px;color:#606266">台</div>
<div class="txt" style="left:1492px;top:360.82px;font-size:14.5px;color:#1890ff;font-weight:normal;">选择</div>
<div class="txt" style="left:1539.5px;top:360.82px;font-size:14.5px;color:#67c23a;font-weight:normal;">查看</div>
<div class="txt" style="left:304px;top:403.76px;width:208px;text-align:center;font-size:18px;color:#606266">01000000010002</div>
<div class="txt" style="left:512px;top:403.76px;width:448px;text-align:center;font-size:18px;color:#606266">111</div>
<div class="txt" style="left:960px;top:403.76px;width:326px;text-align:center;font-size:18px;color:#606266">111</div>
<div class="txt" style="left:1286px;top:403.76px;width:122.5px;text-align:center;font-size:18px;color:#606266">吨</div>
<div class="txt" style="left:1492px;top:403.76px;font-size:14.5px;color:#1890ff;font-weight:normal;">选择</div>
<div class="txt" style="left:1539.5px;top:403.76px;font-size:14.5px;color:#67c23a;font-weight:normal;">查看</div>
<div class="txt" style="left:304px;top:446.7px;width:208px;text-align:center;font-size:18px;color:#606266">0100000003</div>
<div class="txt" style="left:512px;top:446.7px;width:448px;text-align:center;font-size:18px;color:#606266">水杯</div>
<div class="txt" style="left:1286px;top:446.7px;width:122.5px;text-align:center;font-size:18px;color:#606266">台</div>
<div class="txt" style="left:1492px;top:446.7px;font-size:14.5px;color:#1890ff;font-weight:normal;">选择</div>
<div class="txt" style="left:1539.5px;top:446.7px;font-size:14.5px;color:#67c23a;font-weight:normal;">查看</div>
<div class="txt" style="left:304px;top:489.64px;width:208px;text-align:center;font-size:18px;color:#606266">0101000002</div>
<div class="txt" style="left:512px;top:489.64px;width:448px;text-align:center;font-size:18px;color:#606266">123</div>
<div class="txt" style="left:960px;top:489.64px;width:326px;text-align:center;font-size:18px;color:#606266">123</div>
<div class="txt" style="left:1286px;top:489.64px;width:122.5px;text-align:center;font-size:18px;color:#606266">千克</div>
<div class="txt" style="left:1492px;top:489.64px;font-size:14.5px;color:#1890ff;font-weight:normal;">选择</div>
<div class="txt" style="left:1539.5px;top:489.64px;font-size:14.5px;color:#67c23a;font-weight:normal;">查看</div>
<div class="txt" style="left:304px;top:532.58px;width:208px;text-align:center;font-size:18px;color:#606266">0105000001</div>
<div class="txt" style="left:512px;top:532.58px;width:448px;text-align:center;font-size:18px;color:#606266">MK008</div>
<div class="txt" style="left:1286px;top:532.58px;width:122.5px;text-align:center;font-size:18px;color:#606266">台</div>
<div class="txt" style="left:1492px;top:532.58px;font-size:14.5px;color:#1890ff;font-weight:normal;">选择</div>
<div class="txt" style="left:1539.5px;top:532.58px;font-size:14.5px;color:#67c23a;font-weight:normal;">查看</div>
<div class="txt" style="left:304px;top:575.52px;width:208px;text-align:center;font-size:18px;color:#606266">0104000001</div>
<div class="txt" style="left:512px;top:575.52px;width:448px;text-align:center;font-size:18px;color:#606266">保存箱拉杆</div>
<div class="txt" style="left:960px;top:575.52px;width:326px;text-align:center;font-size:18px;color:#606266">lx-001</div>
<div class="txt" style="left:1286px;top:575.52px;width:122.5px;text-align:center;font-size:18px;color:#606266">台</div>
<div class="txt" style="left:1492px;top:575.52px;font-size:14.5px;color:#1890ff;font-weight:normal;">选择</div>
<div class="txt" style="left:1539.5px;top:575.52px;font-size:14.5px;color:#67c23a;font-weight:normal;">查看</div>
<div class="txt" style="left:304px;top:618.46px;width:208px;text-align:center;font-size:18px;color:#606266">0106000009</div>
<div class="txt" style="left:512px;top:618.46px;width:448px;text-align:center;font-size:18px;color:#606266">电脑20260105</div>
<div class="txt" style="left:1286px;top:618.46px;width:122.5px;text-align:center;font-size:18px;color:#606266">台</div>
<div class="txt" style="left:1492px;top:618.46px;font-size:14.5px;color:#1890ff;font-weight:normal;">选择</div>
<div class="txt" style="left:1539.5px;top:618.46px;font-size:14.5px;color:#67c23a;font-weight:normal;">查看</div>
<div class="txt" style="left:304px;top:661.4px;width:208px;text-align:center;font-size:18px;color:#606266">0109000005</div>
<div class="txt" style="left:512px;top:661.4px;width:448px;text-align:center;font-size:18px;color:#606266">1231312</div>
<div class="txt" style="left:960px;top:661.4px;width:326px;text-align:center;font-size:18px;color:#606266">1231</div>
<div class="txt" style="left:1286px;top:661.4px;width:122.5px;text-align:center;font-size:18px;color:#606266">吨</div>
<div class="txt" style="left:1492px;top:661.4px;font-size:14.5px;color:#1890ff;font-weight:normal;">选择</div>
<div class="txt" style="left:1539.5px;top:661.4px;font-size:14.5px;color:#67c23a;font-weight:normal;">查看</div>
<div class="txt" style="left:304px;top:704.34px;width:208px;text-align:center;font-size:18px;color:#606266">0100000004</div>
<div class="txt" style="left:512px;top:704.34px;width:448px;text-align:center;font-size:18px;color:#606266">cp001</div>
<div class="txt" style="left:1286px;top:704.34px;width:122.5px;text-align:center;font-size:18px;color:#606266">千米</div>
<div class="txt" style="left:1492px;top:704.34px;font-size:14.5px;color:#1890ff;font-weight:normal;">选择</div>
<div class="txt" style="left:1539.5px;top:704.34px;font-size:14.5px;color:#67c23a;font-weight:normal;">查看</div>
<div class="txt" style="left:304px;top:747.28px;width:208px;text-align:center;font-size:18px;color:#606266">0100000005</div>
<div class="txt" style="left:512px;top:747.28px;width:448px;text-align:center;font-size:18px;color:#606266">88888</div>
<div class="txt" style="left:1286px;top:747.28px;width:122.5px;text-align:center;font-size:18px;color:#606266">台</div>
<div class="txt" style="left:1492px;top:747.28px;font-size:14.5px;color:#1890ff;font-weight:normal;">选择</div>
<div class="txt" style="left:1539.5px;top:747.28px;font-size:14.5px;color:#67c23a;font-weight:normal;">查看</div>
<div class="txt" style="left:304px;top:790.22px;width:208px;text-align:center;font-size:18px;color:#606266">0101000003</div>
<div class="txt" style="left:512px;top:790.22px;width:448px;text-align:center;font-size:18px;color:#606266">5</div>
<div class="txt" style="left:1286px;top:790.22px;width:122.5px;text-align:center;font-size:18px;color:#606266">千克</div>
<div class="txt" style="left:1492px;top:790.22px;font-size:14.5px;color:#1890ff;font-weight:normal;">选择</div>
<div class="txt" style="left:1539.5px;top:790.22px;font-size:14.5px;color:#67c23a;font-weight:normal;">查看</div>
<div class="txt" style="left:304px;top:833.16px;width:208px;text-align:center;font-size:18px;color:#606266">0100000006</div>
<div class="txt" style="left:512px;top:833.16px;width:448px;text-align:center;font-size:18px;color:#606266">测试机器</div>
<div class="txt" style="left:1286px;top:833.16px;width:122.5px;text-align:center;font-size:18px;color:#606266">套</div>
<div class="txt" style="left:1492px;top:833.16px;font-size:14.5px;color:#1890ff;font-weight:normal;">选择</div>
<div class="txt" style="left:1539.5px;top:833.16px;font-size:14.5px;color:#67c23a;font-weight:normal;">查看</div>
<div class="txt" style="left:304px;top:876.1px;width:208px;text-align:center;font-size:18px;color:#606266">0105000003</div>
<div class="txt" style="left:512px;top:876.1px;width:448px;text-align:center;font-size:18px;color:#606266">家庭机器人</div>
<div class="txt" style="left:960px;top:876.1px;width:326px;text-align:center;font-size:18px;color:#606266">150</div>
<div class="txt" style="left:1286px;top:876.1px;width:122.5px;text-align:center;font-size:18px;color:#606266">吨</div>
<div class="txt" style="left:1492px;top:876.1px;font-size:14.5px;color:#1890ff;font-weight:normal;">选择</div>
<div class="txt" style="left:1539.5px;top:876.1px;font-size:14.5px;color:#67c23a;font-weight:normal;">查看</div>
<div class="txt" style="left:304px;top:919.04px;width:208px;text-align:center;font-size:18px;color:#606266">0101000004</div>
<div class="txt" style="left:512px;top:919.04px;width:448px;text-align:center;font-size:18px;color:#606266">22</div>
<div class="txt" style="left:1286px;top:919.04px;width:122.5px;text-align:center;font-size:18px;color:#606266">台</div>
<div class="txt" style="left:1492px;top:919.04px;font-size:14.5px;color:#1890ff;font-weight:normal;">选择</div>
<div class="txt" style="left:1539.5px;top:919.04px;font-size:14.5px;color:#67c23a;font-weight:normal;">查看</div>
</div>
</div></body></html>
